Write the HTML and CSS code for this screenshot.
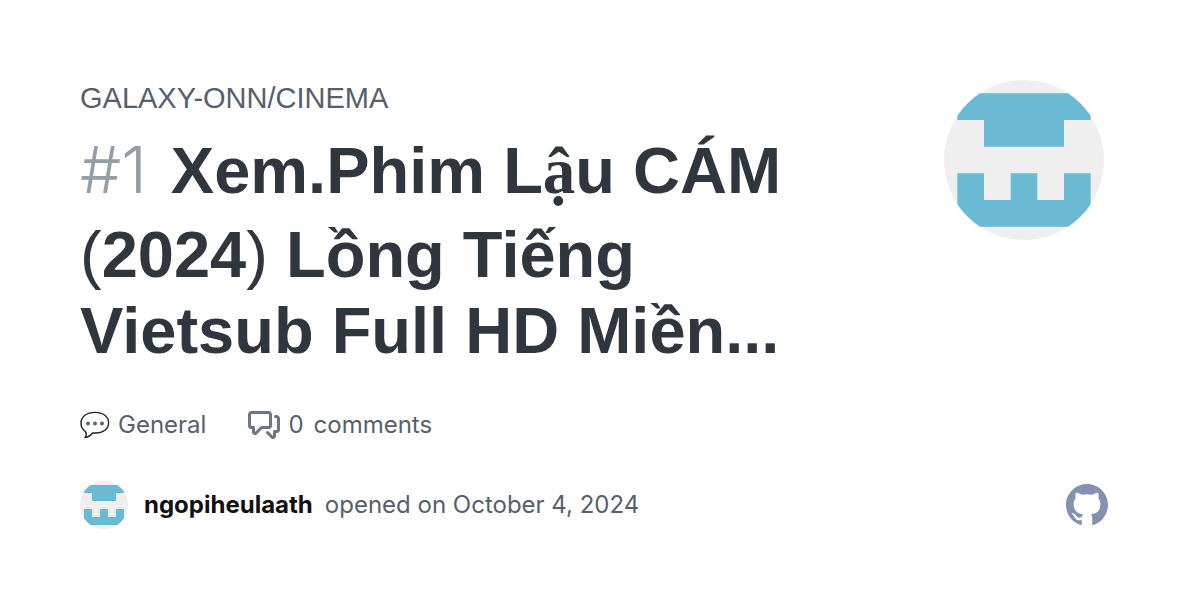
FILE: index.html
```html
<!DOCTYPE html>
<html lang="vi">
<head>
<meta charset="utf-8">
<meta name="viewport" content="width=device-width, initial-scale=1">
<title>GALAXY-ONN/CINEMA discussion #1</title>
<link rel="stylesheet" href="styles.css">
</head>
<body>
<svg class="defs" aria-hidden="true">
  <symbol id="avatar" viewBox="0 0 12 12">
    <path fill="#efefef" d="M0 0h12v12H0z"/>
    <path fill="#6bbad3" d="M1 1h10v2H9v2H3V3H1zM1 7h2v2h2V7h2v2h2V7h2v4H1z"/>
  </symbol>
</svg>
<main class="card">
  <header class="top">
    <div class="heading">
      <p class="repo">GALAXY-ONN/CINEMA</p>
      <h1 class="title">
        <span class="line line-tall"><span class="number">#1</span> Xem.Phim L<span class="serif">ậ</span>u CÁM</span>
        <span class="line"><span class="paren">(</span>2024<span class="paren">)</span> Lồng Tiếng</span>
        <span class="line">Vietsub Full HD Miền...</span>
      </h1>
    </div>
    <svg class="avatar avatar-large" role="img" aria-label="ngopiheulaath"><use href="#avatar"/></svg>
  </header>
  <div class="meta">
    <span class="meta-item">
      <svg class="bubble" viewBox="0 0 30 28" aria-hidden="true">
        <path fill="none" stroke="#222" stroke-width="1.4" stroke-linejoin="round" d="M5.500 20.600C2.600 18.600 1 15.600 1 12.200C1 5.500 6.800 1.400 15 1.400S28.600 5.500 28.600 11.800S23.200 22 15.500 22H12.500C11 24.300 8.500 26 5 26.500C6.600 24.500 6.600 22.400 5.500 20.600Z"/>
        <circle cx="8" cy="12.500" r="2" fill="#586773"/><circle cx="15" cy="12.500" r="2" fill="#586773"/><circle cx="22" cy="12.500" r="2" fill="#586773"/>
      </svg>
      General
    </span>
    <span class="meta-item">
      <svg class="comments" viewBox="0 0 16 16" aria-hidden="true"><path fill="#6e7781" d="M1.750 1h8.500c.966 0 1.750.784 1.750 1.750v5.500A1.750 1.750 0 0 1 10.250 10H7.061l-2.574 2.573A1.458 1.458 0 0 1 2 11.543V10h-.250A1.750 1.750 0 0 1 0 8.250v-5.500C0 1.784.784 1 1.750 1ZM1.500 2.750v5.500c0 .138.112.250.250.250h1a.750.750 0 0 1 .750.750v2.190l2.720-2.720a.749.749 0 0 1 .530-.220h3.500a.250.250 0 0 0 .250-.250v-5.500a.250.250 0 0 0-.250-.250h-8.500a.250.250 0 0 0-.250.250Zm13 2a.250.250 0 0 0-.250-.250h-.500a.750.750 0 0 1 0-1.500h.500c.966 0 1.750.784 1.750 1.750v5.500A1.750 1.750 0 0 1 14.250 12H14v1.543a1.458 1.458 0 0 1-2.487 1.030L9.220 12.280a.749.749 0 1 1 1.060-1.060l2.220 2.220v-2.190a.750.750 0 0 1 .750-.750h1a.250.250 0 0 0 .250-.250Z"/></svg>
      <span class="count">0</span>comments
    </span>
  </div>
  <footer class="footer">
    <svg class="avatar avatar-small" aria-hidden="true"><use href="#avatar"/></svg>
    <strong class="author">ngopiheulaath</strong>
    <span class="opened">opened on October 4, 2024</span>
    <svg class="logo" viewBox="0 0 16 16" role="img" aria-label="GitHub"><path fill="#8491b1" d="M8 0C3.580 0 0 3.580 0 8c0 3.540 2.290 6.530 5.470 7.590.400.070.550-.170.550-.380 0-.190-.010-.820-.010-1.490-2.010.370-2.530-.490-2.690-.940-.090-.230-.480-.940-.820-1.130-.280-.150-.680-.520-.010-.530.630-.010 1.080.580 1.230.820.720 1.210 1.870.870 2.330.660.070-.520.280-.870.510-1.070-1.780-.200-3.640-.890-3.640-3.950 0-.870.310-1.590.820-2.150-.080-.200-.360-1.020.080-2.120 0 0 .670-.210 2.200.820.640-.180 1.320-.270 2-.270s1.360.090 2 .270c1.530-1.040 2.200-.820 2.200-.820.440 1.100.160 1.920.080 2.120.510.560.820 1.270.820 2.150 0 3.070-1.870 3.750-3.650 3.950.290.250.540.730.540 1.480 0 1.070-.010 1.930-.010 2.200 0 .210.150.460.550.380A8.010 8.010 0 0 0 16 8c0-4.420-3.580-8-8-8Z"/></svg>
  </footer>
</main>
</body>
</html>
```
FILE: styles.css
```css
* { box-sizing: border-box; }
body { margin: 0; background: #fff; color: #57606a; font-family: Inter, "Liberation Sans", sans-serif; }
.defs { display: block; width: 0; height: 0; }
.card { display: flex; flex-direction: column; padding: 80px; }
.top { display: flex; justify-content: space-between; align-items: flex-start; padding-right: 16px; }
.repo { margin: 0; font-family: "Liberation Sans", Arial, sans-serif; font-size: 29px; line-height: 36px; }
.title { margin: 16px 0 0; color: #2f363d; font-family: "Liberation Sans", Arial, sans-serif; font-size: 65px; line-height: 76px; font-weight: 700; }
.line { display: block; white-space: nowrap; }
.line-tall { padding-bottom: 8px; }
.number { margin-right: 6px; color: #959da5; font-weight: 300; font-family: Inter, sans-serif; }
.paren { font-weight: 400; }
.serif { font-family: "Liberation Serif", serif; line-height: 1; }
.avatar { border-radius: 50%; flex: none; }
.avatar-large { width: 160px; height: 160px; }
.avatar-small { width: 48px; height: 48px; }
.meta { display: flex; gap: 42px; margin-top: 40px; font-size: 24px; line-height: 32px; }
.meta-item { display: flex; align-items: center; gap: 8px; }
.bubble { width: 30px; height: 28px; }
.comments { width: 32px; height: 32px; }
.count { margin-right: 2px; }
.footer { display: flex; align-items: center; margin-top: 40px; font-size: 24px; line-height: 32px; }
.author { margin-left: 16px; color: #111; }
.opened { margin-left: 12px; }
.logo { width: 42px; height: 42px; margin: 0 12px 0 auto; }
```
